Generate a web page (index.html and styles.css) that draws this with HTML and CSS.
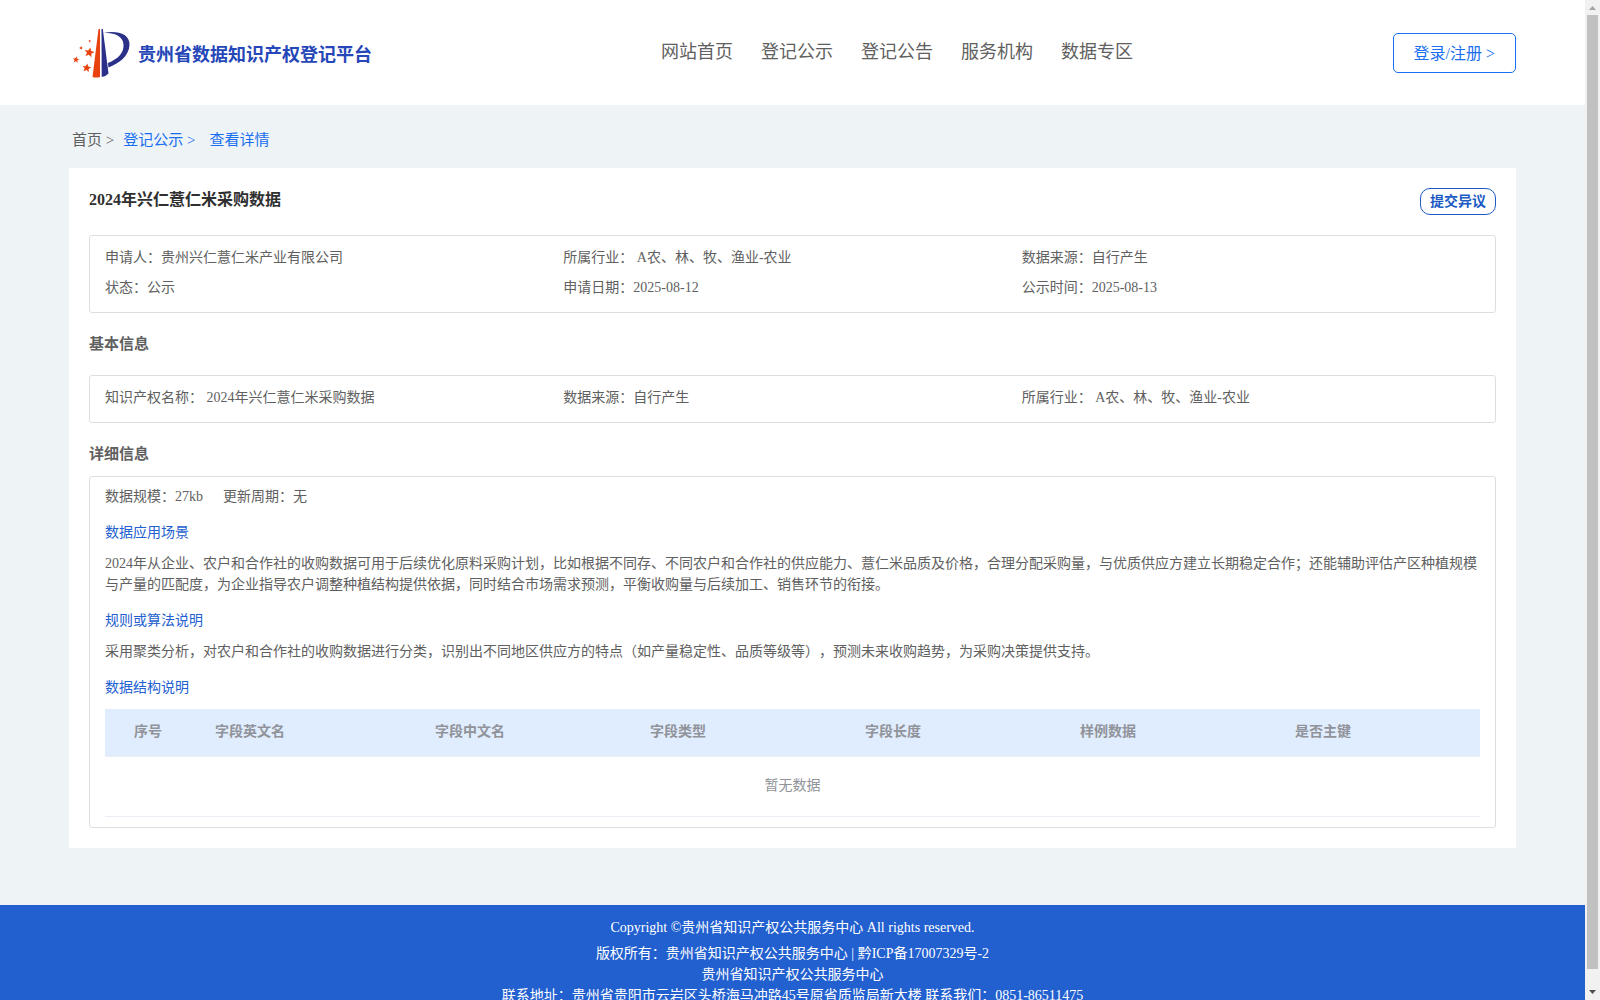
FILE: index.html
```
<!DOCTYPE html>
<html lang="zh-CN">
<head>
    <meta charset="UTF-8">
    <title>贵州省数据知识产权登记平台</title>
    <link rel="stylesheet" href="styles.css">
</head>
<body>
    <div class="page">
        <header class="header">
            <a class="logo" href="#">
                <svg width="58" height="50" viewBox="0 0 58 50" aria-hidden="true">
                    <defs>
                        <polygon id="star" points="0,-10 2.900,-3.500 9.500,-3.100 4.300,1.400 5.900,8.100 0,4.500 -5.900,8.100 -4.300,1.400 -9.500,-3.100 -2.900,-3.500"/>
                    </defs>
                    <path fill="#e8430f" d="M26.500 1h1.500v48q-4 1-7.500 0z"/>
                    <path fill="#2b3088" d="M29.500 1h1.300l5.700 44.500q-2.500 3-6.800 3.500z"/>
                    <path fill="#2b3088" d="M32 4.700C46 2.500 58 6 57.500 17C57 28 47 35.500 36.500 39.500l-.6-4.500C46 31 52 25 51.500 16.500C51 8 43 5 32 4.700z"/>
                    <g fill="#e8430f">
                        <use href="#star" transform="translate(17.300 24.500) rotate(12) scale(.52)"/>
                        <use href="#star" transform="translate(14.700 40) rotate(8) scale(.46)"/>
                        <use href="#star" transform="translate(4 31.700) rotate(8) scale(.34)"/>
                        <use href="#star" transform="translate(9 20) rotate(15) scale(.2)"/>
                        <use href="#star" transform="translate(17.700 13) scale(.14)"/>
                    </g>
                </svg>
                <span class="logo-text">贵州省数据知识产权登记平台</span>
            </a>
            <nav class="nav">
                <a href="#">网站首页</a>
                <a href="#">登记公示</a>
                <a href="#">登记公告</a>
                <a href="#">服务机构</a>
                <a href="#">数据专区</a>
            </nav>
            <button class="login-btn" type="button">登录/注册 &gt;</button>
        </header>

        <div class="breadcrumb">
            <a class="home" href="#">首页 &gt;</a>
            <a href="#">登记公示 &gt;</a>
            <a class="current" href="#">查看详情</a>
        </div>

        <main class="card">
            <div class="card-head">
                <h1>2024年兴仁薏仁米采购数据</h1>
                <button class="objection-btn" type="button">提交异议</button>
            </div>

            <div class="info-box">
                <div>申请人：贵州兴仁薏仁米产业有限公司</div>
                <div>所属行业： A农、林、牧、渔业-农业</div>
                <div>数据来源：自行产生</div>
                <div>状态：公示</div>
                <div>申请日期：2025-08-12</div>
                <div>公示时间：2025-08-13</div>
            </div>

            <h2 class="basic-title">基本信息</h2>
            <div class="info-box">
                <div>知识产权名称： 2024年兴仁薏仁米采购数据</div>
                <div>数据来源：自行产生</div>
                <div>所属行业： A农、林、牧、渔业-农业</div>
            </div>

            <h2 class="detail-title">详细信息</h2>
            <div class="detail-box">
                <div class="scale">
                    <span>数据规模：27kb</span>
                    <span>更新周期：无</span>
                </div>
                <h3>数据应用场景</h3>
                <p>2024年从企业、农户和合作社的收购数据可用于后续优化原料采购计划，比如根据不同存、不同农户和合作社的供应能力、薏仁米品质及价格，合理分配采购量，与优质供应方建立长期稳定合作；还能辅助评估产区种植规模与产量的匹配度，为企业指导农户调整种植结构提供依据，同时结合市场需求预测，平衡收购量与后续加工、销售环节的衔接。</p>
                <h3>规则或算法说明</h3>
                <p>采用聚类分析，对农户和合作社的收购数据进行分类，识别出不同地区供应方的特点（如产量稳定性、品质等级等），预测未来收购趋势，为采购决策提供支持。</p>
                <h3>数据结构说明</h3>
                <table class="fields">
                    <colgroup>
                        <col class="col-index">
                        <col class="col-en">
                        <col class="col-mid">
                        <col class="col-mid">
                        <col class="col-mid">
                        <col class="col-mid">
                        <col>
                    </colgroup>
                    <thead>
                        <tr>
                            <th class="index">序号</th>
                            <th>字段英文名</th>
                            <th>字段中文名</th>
                            <th>字段类型</th>
                            <th>字段长度</th>
                            <th>样例数据</th>
                            <th>是否主键</th>
                        </tr>
                    </thead>
                    <tbody>
                        <tr>
                            <td class="empty" colspan="7">暂无数据</td>
                        </tr>
                    </tbody>
                </table>
            </div>
        </main>

        <footer class="footer">
            <p class="copyright">Copyright ©贵州省知识产权公共服务中心 All rights reserved.</p>
            <p>版权所有：贵州省知识产权公共服务中心 | 黔ICP备17007329号-2</p>
            <p>贵州省知识产权公共服务中心</p>
            <p>联系地址：贵州省贵阳市云岩区头桥海马冲路45号原省质监局新大楼 联系我们：0851-86511475</p>
        </footer>
    </div>

    <div class="scrollbar" aria-hidden="true">
        <svg width="15" height="15" viewBox="0 0 15 15"><path fill="#a3a3a3" d="M4 10l3.500-4L11 10z"/></svg>
        <div class="thumb"></div>
        <svg width="15" height="15" viewBox="0 0 15 15"><path fill="#505050" d="M4 5h7L7.500 9z"/></svg>
    </div>
</body>
</html>
```
FILE: styles.css
```
* {
    box-sizing: border-box;
}

body {
    display: flex;
    height: 100vh;
    margin: 0;
    overflow: hidden;
    background-color: #eef3f6;
    color: #606060;
    font-family: "Liberation Serif", "Noto Sans CJK SC", serif;
    font-size: 14px;
    line-height: 21px;
    text-spacing-trim: space-all;
}

h1,
h2,
h3,
p {
    margin: 0;
}

a {
    color: inherit;
    text-decoration: none;
}

button {
    background-color: #fff;
    font-family: inherit;
    cursor: pointer;
}

.page {
    flex: 1;
    height: 100vh;
    overflow: hidden;
}

.header {
    display: grid;
    grid-template-columns: 1fr auto 1fr;
    align-items: center;
    height: 105px;
    padding: 0 69px;
    background-color: #fff;
}

.logo {
    display: flex;
    align-items: center;
    gap: 8px;
    padding-left: 3px;
}

.logo-text {
    padding-top: 5px;
    color: #2547b8;
    font-size: 18px;
    font-weight: bold;
}

.nav {
    display: flex;
    gap: 28px;
    padding-left: 209px;
    font-size: 18px;
}

.login-btn {
    justify-self: end;
    height: 40px;
    padding: 0 20px 2px;
    border: 1px solid #1a6ff0;
    border-radius: 5px;
    color: #1a6ff0;
    font-size: 16px;
}

.breadcrumb {
    display: flex;
    gap: 9px;
    padding: 25px 72px 17px;
    color: #1a6ff0;
    font-size: 15px;
}

.breadcrumb .home {
    color: #606060;
}

.breadcrumb .current {
    margin-left: 5px;
}

.card {
    margin: 0 69px;
    padding: 20px;
    background-color: #fff;
}

.card-head {
    display: flex;
    justify-content: space-between;
    margin-bottom: 20px;
}

.card-head h1 {
    color: #303030;
    font-size: 16px;
    line-height: 24px;
}

.objection-btn {
    height: 27px;
    padding: 0 9px;
    border: 1px solid #1c5bc4;
    border-radius: 10px;
    color: #1c5bc4;
    font-size: 14px;
    font-weight: bold;
    line-height: 21px;
}

.info-box {
    display: grid;
    grid-template-columns: repeat(3, 1fr);
    padding: 7px 15px 9px;
    border: 1px solid #dedede;
    border-radius: 3px;
    line-height: 30px;
}

h2 {
    font-size: 15px;
    line-height: 22px;
}

.basic-title {
    padding: 20px 0;
}

.detail-title {
    padding: 20px 0 11px;
}

.detail-box {
    padding: 9px 15px 10px;
    border: 1px solid #dedede;
    border-radius: 3px;
}

.scale {
    display: flex;
    gap: 20px;
}

h3 {
    margin: 15px 0 10px;
    color: #2260d0;
    font-size: 14px;
    font-weight: normal;
}

.fields {
    width: 100%;
    margin-top: 11px;
    border-collapse: collapse;
    table-layout: fixed;
    color: #909399;
}

.col-index {
    width: 100px;
}

.col-en {
    width: 16%;
}

.col-mid {
    width: 215px;
}

.fields th {
    padding: 12px 10px 14px;
    border-bottom: 1px solid #ebeef5;
    background-color: #e0edff;
    text-align: left;
}

.fields .index {
    padding-left: 29px;
}

.fields .empty {
    padding: 18px 0 20px;
    border-bottom: 1px solid #ebeef5;
    text-align: center;
}

.footer {
    margin-top: 57px;
    padding: 12px 0 20px;
    background-color: #2260d0;
    color: #fff;
    text-align: center;
}

.copyright {
    margin-bottom: 5px;
}

.scrollbar {
    display: flex;
    flex-direction: column;
    width: 15px;
    background-color: #f1f1f1;
}

.thumb {
    flex: 1;
    margin: 0 2px 16px;
    background-color: #c1c1c1;
}
```
